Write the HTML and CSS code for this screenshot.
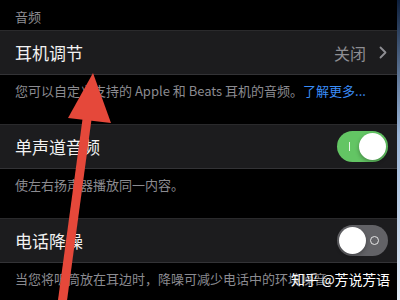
FILE: index.html
```html
<!DOCTYPE html>
<html lang="zh-CN">
<head>
<meta charset="UTF-8" />
<title>音频设置</title>
<link rel="stylesheet" href="styles.css">
</head>
<body>

<div class="screen">
  <div class="section-title">音频</div>

  <div class="cell">
    <span class="cell-label">耳机调节</span>
    <span class="cell-value">关闭
      <svg class="chevron" width="8" height="13" viewBox="0 0 8 13"><path d="M1.5 1.5 L6.5 6.5 L1.5 11.5" fill="none" stroke="#8e8e93" stroke-width="1.8" stroke-linecap="round" stroke-linejoin="round"/></svg>
    </span>
  </div>
  <div class="footer">您可以自定义支持的 Apple 和 Beats 耳机的音频。<span class="link">了解更多...</span></div>

  <div class="cell">
    <span class="cell-label">单声道音频</span>
    <span class="switch on"><span class="mark-on"></span><span class="knob"></span></span>
  </div>
  <div class="footer">使左右扬声器播放同一内容。</div>

  <div class="cell">
    <span class="cell-label">电话降噪</span>
    <span class="switch off"><span class="knob"></span><span class="mark-off"></span></span>
  </div>
  <div class="footer nowrap">当您将听筒放在耳边时，降噪可减少电话中的环境噪音。</div>

  <div class="watermark">知乎 @芳说芳语</div>

  <!-- 红色箭头标注 -->
  <svg class="arrow" width="400" height="300" viewBox="0 0 400 300">
    <line x1="88" y1="112" x2="62" y2="304" stroke="#e5483a" stroke-width="9"/>
    <polygon points="93,73 68,118 111,123" fill="#e5483a"/>
  </svg>
</div>

</body>
</html>
```

FILE: styles.css
```css
html, body {
  margin: 0;
  padding: 0;
}
body {
  width: 400px;
  height: 300px;
  overflow: hidden;
  background: linear-gradient(to bottom, #0d1f3c, #9db8da 45%, #e6eef8);
  font-family: "Noto Sans CJK SC", "Noto Sans", sans-serif;
}
.screen {
  position: relative;
  width: 397px;
  height: 300px;
  background: #000;
  overflow: hidden;
}
.section-title {
  height: 30px;
  padding-left: 15px;
  line-height: 34px;
  font-size: 13px;
  color: #8d8d92;
}
.cell {
  display: flex;
  align-items: center;
  justify-content: space-between;
  padding: 0 9px 0 15px;
  background: #1c1c1e;
  border-top: 1px solid #2a2a2c;
  border-bottom: 1px solid #333336;
  height: 43px;
}
.cell-label {
  font-size: 17px;
  color: #f2f2f2;
}
.cell-value {
  display: flex;
  align-items: center;
  gap: 13px;
  font-size: 16px;
  color: #8e8e93;
  margin-right: 1px;
}
.footer {
  padding: 7px 15px 24px;
  font-size: 13px;
  line-height: 18px;
  color: #8b8b90;
}
.footer.nowrap {
  white-space: nowrap;
  overflow: hidden;
}
.link {
  color: #3a8cf7;
}
.switch {
  position: relative;
  display: flex;
  align-items: center;
  width: 51px;
  height: 31px;
  border-radius: 16px;
  box-sizing: border-box;
  padding: 2px;
}
.switch.on {
  background: #63c564;
  justify-content: flex-end;
}
.switch.off {
  background: #626266;
  justify-content: flex-start;
}
.knob {
  width: 27px;
  height: 27px;
  border-radius: 50%;
  background: #fff;
  box-shadow: 0 2px 4px rgba(0,0,0,0.3);
}
.mark-on {
  position: absolute;
  left: 12px;
  top: 11px;
  width: 1px;
  height: 9px;
  background: #e8f7e8;
}
.mark-off {
  position: absolute;
  right: 9px;
  top: 11px;
  width: 7px;
  height: 7px;
  border: 1.5px solid #e6e6e6;
  border-radius: 50%;
}
.watermark {
  position: absolute;
  left: 291px;
  top: 269px;
  font-size: 14px;
  line-height: 20px;
  letter-spacing: -0.2px;
  color: #fff;
  white-space: nowrap;
  text-shadow: 0 0 2px rgba(0,0,0,0.6);
}
.arrow {
  position: absolute;
  left: 0;
  top: 0;
}
```
